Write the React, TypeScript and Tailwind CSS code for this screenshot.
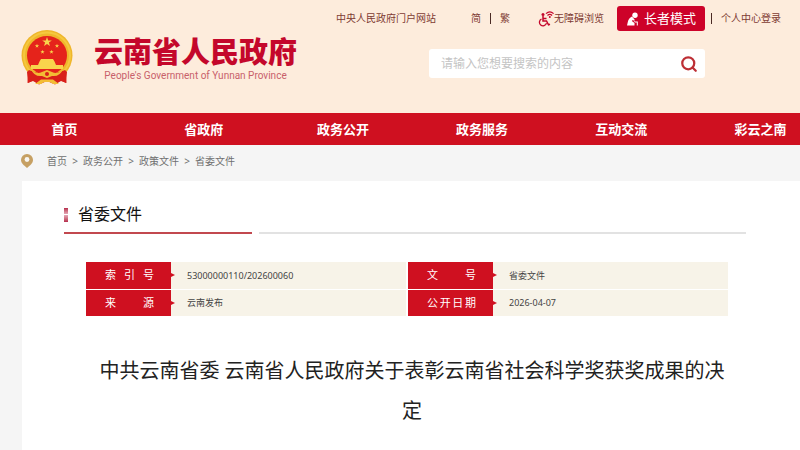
import { useState } from 'react';
import { Search } from 'lucide-react';

const navItems = ['首页', '省政府', '政务公开', '政务服务', '互动交流', '彩云之南'];

const breadcrumbs = ['首页', '政务公开', '政策文件', '省委文件'];

const metaRows = [
  [
    { label: '索引号', value: '53000000110/202600060' },
    { label: '文号', value: '省委文件' },
  ],
  [
    { label: '来源', value: '云南发布' },
    { label: '公开日期', value: '2026-04-07' },
  ],
];

const starPath = 'M0 -5L1.2 -1.6L4.8 -1.6L1.9 0.6L3 4L0 1.9L-3 4L-1.9 0.6L-4.8 -1.6L-1.2 -1.6Z';

const Emblem = () => (
  <svg viewBox="0 0 52 56" className="h-14 w-[52px] shrink-0" aria-hidden="true">
    {/* ribbons */}
    <path d="M8 36L6.500 53L12 51L18 54.500L26 51L34 54.500L40 51L45.500 53L44 36Z" fill="#d9201a" />
    <ellipse cx="26" cy="25.500" rx="25.500" ry="25.500" fill="#efb62b" />
    <ellipse cx="26" cy="25.500" rx="23" ry="23" fill="none" stroke="#f5c83e" strokeWidth="2" />
    <ellipse cx="26" cy="25.500" rx="20" ry="19.500" fill="#e5231b" />
    <g fill="#f9d34c">
      <path d={starPath} transform="translate(26 12)" />
      <path d={starPath} transform="translate(16 16) scale(.45)" />
      <path d={starPath} transform="translate(36 16) scale(.45)" />
      <path d={starPath} transform="translate(21.500 22) scale(.45)" />
      <path d={starPath} transform="translate(30.500 22) scale(.45)" />
      {/* gate tower */}
      <path d="M20 29H32L33.500 31.500H18.500ZM18.500 31.500H33.500L35 35H17ZM10 35H42V39H10Z" />
    </g>
    <path d="M8 40Q26 48 44 40L46 42L45 53L41 51H11L7 53L6 42Z" fill="#d9201a" />
    <path d="M10 39Q15 45 21 42L26 40L31 42Q37 45 42 39Q39 47 31 46L26 48L21 46Q13 47 10 39Z" fill="#f3bd35" />
    <circle cx="26" cy="44" r="2" fill="#d9201a" />
    <path d="M14 54L20 49.500H32L38 54H32L29 52H23L20 54Z" fill="#f3bd35" />
  </svg>
);

const WheelchairIcon = () => (
  <svg viewBox="0 0 16 16" className="size-4 shrink-0" fill="none" stroke="currentColor" aria-hidden="true">
    <circle cx="5" cy="3.500" r="1.500" fill="currentColor" stroke="none" />
    <path d="M5 5V10H8.500L10.500 13.800L12 13.200M5 7.500H8.500" strokeWidth="1.500" />
    <path d="M3.500 8A3.600 3.600 0 1 0 8.500 12.200" strokeWidth="1.300" />
    <path d="M8 2.600Q11.800 -0.800 15.600 2.600M9.500 4.500Q11.800 2.400 14.100 4.500" strokeWidth="1.200" />
    <circle cx="11.800" cy="6" r="1" fill="currentColor" stroke="none" />
  </svg>
);

const ElderIcon = () => (
  <svg viewBox="0 0 14 14" className="size-[14px] shrink-0" fill="currentColor" aria-hidden="true">
    <circle cx="9" cy="3.200" r="2.700" />
    <path d="M6 4.500Q2.500 6 1.800 10L1 13.500H8.500V11L5.800 9L6.800 8L9 9.500H11.800V13.500H10.800V10.500H9L6.800 8L9.200 8.500L7.500 6.200Z" />
  </svg>
);

const PinIcon = () => (
  <svg viewBox="0 0 12 14" className="h-[14px] w-3 shrink-0" aria-hidden="true">
    <path d="M6 0A6 6 0 0 0 0 6C0 9 3 11.500 6 14C9 11.500 12 9 12 6A6 6 0 0 0 6 0Z" fill="#c6a063" />
    <circle cx="6" cy="5.500" r="2.400" fill="#f8f6f2" />
  </svg>
);

const Header = () => {
  const [keyword, setKeyword] = useState('');

  return (
    <header className="flex justify-between bg-[#fdecdc] pr-4 pb-[27px] pl-[21px]">
      <a href="#" className="flex items-center pt-[30px]">
        <Emblem />
        <div className="ml-[21px] flex flex-col items-center text-[#c4072b]">
          <span className="text-[29px] leading-9 font-black">云南省人民政府</span>
          <span className="font-[Roboto,sans-serif] text-[10px] leading-3 text-[#c8606a]">People's Government of Yunnan Province</span>
        </div>
      </a>

      <div className="flex w-[448px] flex-col pt-[6px]">
        <div className="flex items-center text-[10px] text-[#7d3b33]">
          <a href="#">中央人民政府门户网站</a>
          <div className="ml-[35px] flex items-center gap-[9px]">
            <a href="#">简</a>
            <span className="h-[11px] w-px bg-[#4a2a24]" />
            <a href="#">繁</a>
          </div>
          <a href="#" className="ml-7 flex items-center">
            <span className="text-[#c4072b]"><WheelchairIcon /></span>
            无障碍浏览
          </a>
          <button type="button" className="ml-[13px] flex h-[25px] w-[88px] items-center justify-center gap-1 rounded-[3px] bg-[#cd0229] text-[13px] text-white">
            <ElderIcon />
            长者模式
          </button>
          <span className="ml-[6px] h-[11px] w-px bg-[#4a2a24]" />
          <a href="#" className="ml-[9px]">个人中心登录</a>
        </div>

        <form className="mt-[18px] mr-[79px] ml-[93px] flex h-[29px] items-center rounded-[3px] bg-white pr-[7px] pl-3" onSubmit={(e) => e.preventDefault()}>
          <input
            type="text"
            aria-label="搜索"
            value={keyword}
            onChange={(e) => setKeyword(e.target.value)}
            placeholder="请输入您想要搜索的内容"
            className="min-w-0 flex-1 text-xs outline-none placeholder:text-[#c4c4c4]"
          />
          <button type="submit" aria-label="搜索" className="text-[#bd2f35]">
            <Search className="size-[18px]" strokeWidth={3} />
          </button>
        </form>
      </div>
    </header>
  );
};

const App = () => {
  return (
    <div className="min-h-screen overflow-hidden bg-[#f5f5f5] font-['Noto_Sans','Noto_Sans_CJK_SC',sans-serif]">
      <Header />

      <nav className="bg-[#cf1020]">
        <ul className="-mr-[30px] -ml-[5px] grid grid-cols-6">
          {navItems.map((item) => (
            <li key={item}>
              <a href="#" className="block text-center text-[13px] leading-8 font-bold text-white">{item}</a>
            </li>
          ))}
        </ul>
      </nav>

      <div className="flex h-9 items-center pb-1 pl-[21px] text-[10px] text-[#707070]">
        <PinIcon />
        <ol className="ml-[14px] flex">
          {breadcrumbs.map((item, index) => (
            <li key={item} className="flex">
              {index > 0 && <span className="w-4 text-center">&gt;</span>}
              <a href="#">{item}</a>
            </li>
          ))}
        </ol>
      </div>

      <main className="ml-[22px] min-h-[269px] bg-white pt-4 pr-[54px] pl-[42px]">
        <div className="flex gap-[7px]">
          <h2 className="flex w-[188px] items-center gap-[10px] border-b-2 border-[#c2484f] text-base leading-[35px] text-[#111]">
            <span className="flex h-[14px] w-1 flex-col gap-px">
              <span className="flex-1 bg-linear-to-b from-[#b52a4d] to-[#e3a9b8]" />
              <span className="flex-1 bg-linear-to-t from-[#b52a4d] to-[#e3a9b8]" />
            </span>
            省委文件
          </h2>
          <div className="flex-1 border-b-2 border-[#e2e2e2]" />
        </div>

        <div className="mt-7 mr-[18px] ml-[22px]">
          <table className="w-full table-fixed border-collapse">
            <colgroup>
              <col className="w-[85px]" />
              <col />
              <col className="w-[86px]" />
              <col className="w-[235px]" />
            </colgroup>
            <tbody>
              {metaRows.map((row) => (
                <tr key={row[0].label} className="border-b border-white">
                  {row.map((cell, index) => [
                    <th
                      key={cell.label}
                      className={`relative h-[27px] bg-[#cf1020] bg-clip-padding pr-[17px] pl-[19px] text-[11px] leading-4 font-normal text-white [text-align-last:justify] ${index > 0 ? 'border-l-2 border-white' : ''}`}
                    >
                      {cell.label}
                      <span className="absolute top-[11px] -right-1 border-y-2 border-r-0 border-l-4 border-y-transparent border-l-[#cf1020]" />
                    </th>,
                    <td key={cell.value} className="bg-[#f7f3e8] pl-4 text-[9px] text-[#444]">{cell.value}</td>,
                  ])}
                </tr>
              ))}
            </tbody>
          </table>
        </div>

        <h1 className="mt-[34px] mr-[14px] ml-7 text-center text-xl leading-10 text-[#222]">
          中共云南省委 云南省人民政府关于表彰云南省社会科学奖获奖成果的决定
        </h1>
      </main>
    </div>
  );
};

export default App;
